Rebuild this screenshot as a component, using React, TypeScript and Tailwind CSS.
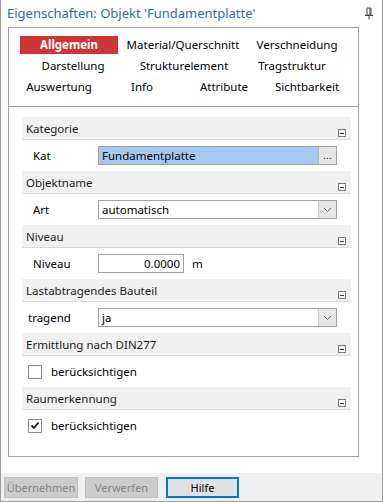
import React from "react";

function MinusBox() {
  return (
    <div className="w-[8px] h-[8px] border border-[#7a7a7a] bg-white flex items-center justify-center">
      <div className="w-[4px] h-[1px] bg-[#333]" />
    </div>
  );
}

function Section({ title, children }: { title: string; children: React.ReactNode }) {
  return (
    <div>
      <div className="h-[23px] bg-[#f0f0f0] border-b border-[#d9d9d9] flex justify-between">
        <span className="self-center pl-[4px] pt-[1px] text-[#1a1a1a]">{title}</span>
        <div className="self-end pb-[2px] pr-[5px]">
          <MinusBox />
        </div>
      </div>
      <div className="h-[31px] flex items-center">{children}</div>
    </div>
  );
}

function Label({ text }: { text: string }) {
  return <span className="w-[76px] pl-[11px] shrink-0">{text}</span>;
}

function Chevron() {
  return (
    <svg width="9" height="6" viewBox="0 0 9 6">
      <path d="M1 1 L4.5 4.5 L8 1" fill="none" stroke="#6d6d6d" strokeWidth="1" />
    </svg>
  );
}

function Combo({ value }: { value: string }) {
  return (
    <div className="w-[239px] h-[19px] border border-[#a0a0a0] flex bg-white">
      <span className="flex-1 pl-[3px] leading-[17px]">{value}</span>
      <div className="w-[18px] bg-[#e5e5e5] border-l border-[#c8c8c8] flex items-center justify-center">
        <Chevron />
      </div>
    </div>
  );
}

function CheckBox({ checked }: { checked?: boolean }) {
  return (
    <div className="w-[14px] h-[14px] border border-[#8a8a8a] bg-white flex items-center justify-center">
      {checked && (
        <svg width="10" height="9" viewBox="0 0 10 9">
          <path d="M1.5 4.5 L4 7 L8.5 1.5" fill="none" stroke="#111" strokeWidth="1.8" />
        </svg>
      )}
    </div>
  );
}

function Tab({ label, w, active }: { label: string; w: string; active?: boolean }) {
  return (
    <div className={`${w} h-[21px] flex items-center justify-center whitespace-nowrap`}>
      {active ? (
        <div className="w-full h-[18px] bg-[#d13438] text-white font-bold flex items-center justify-center">
          {label}
        </div>
      ) : (
        <span>{label}</span>
      )}
    </div>
  );
}

export default function App() {
  return (
    <div className="w-[383px] h-[502px] bg-white border-l border-r border-b border-[#9c9c9c] flex flex-col font-['Noto_Sans',sans-serif] text-[11.5px] text-black">
      {/* Title */}
      <div className="h-[27px] flex items-center justify-between pl-[6px] pr-[8px] shrink-0">
        <span className="text-[13px] text-[#2b6ab8]">Eigenschaften: Objekt 'Fundamentplatte'</span>
        <svg width="10" height="13" viewBox="0 0 10 13" className="mb-[1px]">
          <path d="M3 1 H7 V8 H3 Z" fill="none" stroke="#444" strokeWidth="1" />
          <path d="M6 1 V8" stroke="#444" strokeWidth="1" />
          <path d="M1 8.5 H9" stroke="#444" strokeWidth="1" />
          <path d="M5 9 V12.5" stroke="#444" strokeWidth="1" />
        </svg>
      </div>

      {/* Panel */}
      <div className="ml-[7px] w-[351px] h-[430px] border border-[#a0a0a0] flex flex-col shrink-0">
        <div className="pt-[6px] pb-[9px] pl-[11px] border-b border-[#a0a0a0]">
          <div className="flex">
            <Tab label="Allgemein" w="w-[98px]" active />
            <Tab label="Material/Querschnitt" w="w-[130px]" />
            <Tab label="Verschneidung" w="w-[98px]" />
          </div>
          <div className="flex">
            <Tab label="Darstellung" w="w-[106px]" />
            <Tab label="Strukturelement" w="w-[116px]" />
            <Tab label="Tragstruktur" w="w-[100px]" />
          </div>
          <div className="flex">
            <Tab label="Auswertung" w="w-[78px]" />
            <Tab label="Info" w="w-[88px]" />
            <Tab label="Attribute" w="w-[76px]" />
            <Tab label="Sichtbarkeit" w="w-[90px]" />
          </div>
        </div>

        <div className="mt-[10px] ml-[13px] w-[329px] flex flex-col">
          <Section title="Kategorie">
            <Label text="Kat" />
            <div className="w-[239px] h-[19px] border border-[#a0a0a0] flex">
              <span className="flex-1 bg-[#a8c9ef] pl-[3px] leading-[17px]">Fundamentplatte</span>
              <div className="w-[18px] bg-[#e5e5e5] border-l border-[#b4b4b4] flex items-end justify-center pb-[4px]">
                <span className="text-[9px] leading-none tracking-[0.5px]">...</span>
              </div>
            </div>
          </Section>
          <Section title="Objektname">
            <Label text="Art" />
            <Combo value="automatisch" />
          </Section>
          <Section title="Niveau">
            <Label text="Niveau" />
            <div className="w-[86px] h-[19px] border border-[#a0a0a0] text-right pr-[3px] leading-[17px]">0.0000</div>
            <span className="ml-[8px]">m</span>
          </Section>
          <Section title="Lastabtragendes Bauteil">
            <span className="w-[76px] pl-[6px] shrink-0">tragend</span>
            <Combo value="ja" />
          </Section>
          <Section title="Ermittlung nach DIN277">
            <div className="ml-[6px] flex items-center gap-[9px]">
              <CheckBox />
              <span>berücksichtigen</span>
            </div>
          </Section>
          <Section title="Raumerkennung">
            <div className="ml-[6px] flex items-center gap-[9px]">
              <CheckBox checked />
              <span>berücksichtigen</span>
            </div>
          </Section>
        </div>
      </div>

      <div className="h-[16px] shrink-0" />

      {/* Footer */}
      <div className="h-[28px] bg-[#f0f0f0] flex items-start pt-[4px] pl-[3px] shrink-0 text-[11px]">
        <button className="w-[74px] h-[21px] bg-[#cccccc] border border-[#bfbfbf] text-[#838383] leading-none whitespace-nowrap">Übernehmen</button>
        <button className="ml-[7px] w-[73px] h-[21px] bg-[#cccccc] border border-[#bfbfbf] text-[#838383] leading-none whitespace-nowrap">Verwerfen</button>
        <button className="ml-[8px] w-[73px] h-[21px] bg-[#e1e1e1] border-2 border-[#0078d7] text-black leading-none whitespace-nowrap">Hilfe</button>
      </div>
    </div>
  );
}
